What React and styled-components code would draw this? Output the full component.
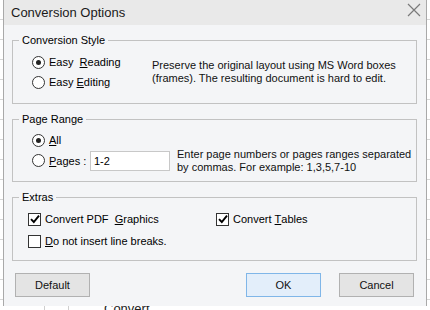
import React, { useState } from 'react';
import styled, { createGlobalStyle } from 'styled-components';

const GlobalStyle = createGlobalStyle`
  html, body {
    margin: 0;
    padding: 0;
  }
  body {
    width: 430px;
    height: 310px;
    overflow: hidden;
    font-family: 'Liberation Sans', Arial, sans-serif;
    font-size: 11px;
    color: #000;
  }
`;

// 뒤에 깔린 스프레드시트 배경
const Backdrop = styled.div`
  position: relative;
  width: 430px;
  height: 310px;
  background-color: #fff;
  background-image:
    repeating-linear-gradient(to bottom, transparent 0 19px, #d6d6d6 19px 20px),
    linear-gradient(to right, transparent 44px, #cfcfcf 44px 45px, transparent 45px 68px, #cfcfcf 68px 69px, transparent 69px);
`;

const BackText = styled.span`
  position: absolute;
  left: 104px;
  top: 302px;
  font-size: 13px;
  line-height: 14px;
  color: #222;
`;

const Dialog = styled.div`
  position: relative;
  margin-left: 3px;
  width: 422px;
  height: 306px;
  border-left: 1px solid #a9a9a9;
  border-right: 1px solid #a9a9a9;
  background: #f4f5f7;
  display: flex;
  flex-direction: column;
`;

const TitleBar = styled.div`
  height: 25px;
  flex-shrink: 0;
  background: #e9e9e9;
  display: flex;
  align-items: center;
  justify-content: space-between;
  padding: 0 5px 1px 7px;
  box-sizing: border-box;
`;

const Title = styled.span`
  font-size: 13px;
  color: #1a1a1a;
`;

const CloseIcon = styled.svg`
  width: 14px;
  height: 14px;
  margin-top: -4px;
`;

const Body = styled.div`
  flex: 1;
  display: flex;
  flex-direction: column;
  padding: 0 9px 9px 8px;
`;

const Group = styled.fieldset`
  margin: 8px 0 0;
  padding: 0;
  border: 1px solid #c2c2c2;
  min-width: 0;
`;

const Legend = styled.legend`
  margin-left: 6px;
  padding: 0 3px;
  font-size: 11px;
  line-height: 14px;
`;

const GroupBody = styled.div`
  padding: ${({ pad }) => pad};
`;

const Row = styled.div`
  display: flex;
  align-items: center;
  height: ${({ h }) => h || 20}px;
`;

const Column = styled.div`
  display: flex;
  flex-direction: column;
  width: ${({ w }) => w}px;
  flex-shrink: 0;
`;

const Split = styled.div`
  display: flex;
  align-items: center;
`;

const Note = styled.div`
  font-size: 11px;
  line-height: 13px;
  color: #111;
  white-space: nowrap;
`;

const RadioCircle = styled.span`
  width: 11px;
  height: 11px;
  border: 1px solid #333;
  border-radius: 50%;
  background: #fff;
  display: inline-flex;
  align-items: center;
  justify-content: center;
  margin-right: 4px;
  flex-shrink: 0;

  &::after {
    content: '';
    width: 5px;
    height: 5px;
    border-radius: 50%;
    background: ${({ checked }) => (checked ? '#222' : 'transparent')};
  }
`;

const Label = styled.label`
  display: inline-flex;
  align-items: center;
  cursor: default;
  white-space: pre;
  font-size: 11px;
`;

const Box = styled.span`
  width: 11px;
  height: 11px;
  border: 1px solid #333;
  background: #fff;
  display: inline-flex;
  align-items: center;
  justify-content: center;
  margin-right: 4px;
  flex-shrink: 0;
`;

const PageInput = styled.input`
  width: 80px;
  height: 20px;
  box-sizing: border-box;
  margin: 0 7px 0 0;
  padding: 0 3px;
  border: 1px solid #c8c8c8;
  outline: none;
  background: #fff;
  font-family: inherit;
  font-size: 11px;
`;

const ButtonRow = styled.div`
  margin-top: auto;
  display: flex;
  padding: 0 3px;
`;

const Button = styled.button`
  width: 75px;
  height: 24px;
  margin: 0 ${({ mr }) => mr || 0}px 0 0;
  padding: 0;
  font-family: inherit;
  font-size: 11px;
  color: #111;
  border: 1px solid ${({ primary }) => (primary ? '#80b6e8' : '#b1b1b1')};
  background: ${({ primary }) => (primary ? '#e3eefa' : '#e4e4e4')};
`;

const Spacer = styled.div`
  flex: 1;
`;

function Radio({ checked, children, onClick }) {
  return (
    <Label onClick={onClick}>
      <RadioCircle checked={checked} />
      {children}
    </Label>
  );
}

function Check({ checked, children, onClick }) {
  return (
    <Label onClick={onClick}>
      <Box>
        {checked && (
          <svg width='10' height='10' viewBox='0 0 10 10'>
            <path d='M1 5.2 L3.8 8 L9 1.6' fill='none' stroke='#000' strokeWidth='1.9' />
          </svg>
        )}
      </Box>
      {children}
    </Label>
  );
}

export default function App() {
  const [style, setStyle] = useState('reading');
  const [range, setRange] = useState('all');
  const [graphics, setGraphics] = useState(true);
  const [tables, setTables] = useState(true);
  const [noBreaks, setNoBreaks] = useState(false);

  return (
    <>
      <GlobalStyle />
      <Backdrop>
        <BackText>Convert</BackText>
        <Dialog>
          <TitleBar>
            <Title>Conversion Options</Title>
            <CloseIcon viewBox='0 0 14 14'>
              <path d='M1 1 L13 13 M13 1 L1 13' stroke='#7a7a7a' strokeWidth='1.2' />
            </CloseIcon>
          </TitleBar>
          <Body>
            <Group>
              <Legend>Conversion Style</Legend>
              <GroupBody pad='5px 10px 11px 19px'>
                <Split>
                  <Column w={120}>
                    <Row>
                      <Radio checked={style === 'reading'} onClick={() => setStyle('reading')}>
                        Easy  <u>R</u>eading
                      </Radio>
                    </Row>
                    <Row>
                      <Radio checked={style === 'editing'} onClick={() => setStyle('editing')}>
                        Easy <u>E</u>diting
                      </Radio>
                    </Row>
                  </Column>
                  <Note>
                    Preserve the original layout using MS Word boxes
                    <br />
                    (frames). The resulting document is hard to edit.
                  </Note>
                </Split>
              </GroupBody>
            </Group>

            <Group>
              <Legend>Page Range</Legend>
              <GroupBody pad='4px 10px 10px 19px'>
                <Row>
                  <Radio checked={range === 'all'} onClick={() => setRange('all')}>
                    <u>A</u>ll
                  </Radio>
                </Row>
                <Row h={21}>
                  <Column w={58}>
                    <Radio checked={range === 'pages'} onClick={() => setRange('pages')}>
                      <u>P</u>ages :
                    </Radio>
                  </Column>
                  <PageInput defaultValue='1-2' />
                  <Note>
                    Enter page numbers or pages ranges separated
                    <br />
                    by commas. For example: 1,3,5,7-10
                  </Note>
                </Row>
              </GroupBody>
            </Group>

            <Group>
              <Legend>Extras</Legend>
              <GroupBody pad='4px 10px 8px 15px'>
                <Row h={22}>
                  <Column w={188}>
                    <Check checked={graphics} onClick={() => setGraphics(!graphics)}>
                      Convert PDF  <u>G</u>raphics
                    </Check>
                  </Column>
                  <Check checked={tables} onClick={() => setTables(!tables)}>
                    Convert <u>T</u>ables
                  </Check>
                </Row>
                <Row h={22}>
                  <Check checked={noBreaks} onClick={() => setNoBreaks(!noBreaks)}>
                    <u>D</u>o not insert line breaks.
                  </Check>
                </Row>
              </GroupBody>
            </Group>

            <ButtonRow>
              <Button>Default</Button>
              <Spacer />
              <Button primary mr={18}>OK</Button>
              <Button>Cancel</Button>
            </ButtonRow>
          </Body>
        </Dialog>
      </Backdrop>
    </>
  );
}
